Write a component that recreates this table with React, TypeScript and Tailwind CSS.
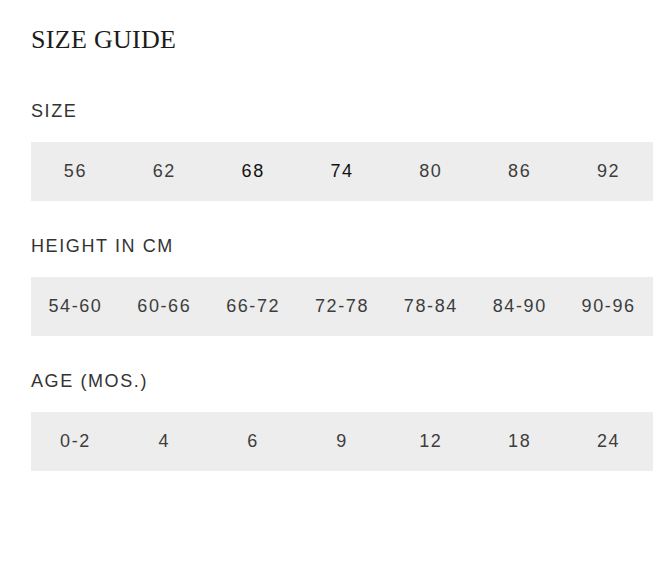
const sections = [
  { label: "SIZE", values: ["56", "62", "68", "74", "80", "86", "92"], dark: ["68", "74"] },
  { label: "HEIGHT IN CM", values: ["54-60", "60-66", "66-72", "72-78", "78-84", "84-90", "90-96"], dark: [] },
  { label: "AGE (MOS.)", values: ["0-2", "4", "6", "9", "12", "18", "24"], dark: [] },
];

export default function App() {
  return (
    <main className="min-h-[562px] w-[671px] bg-white pl-[31px] pt-[24px]" style={{ fontFamily: '"Liberation Sans", Arial, sans-serif' }}>
      <h1 className="text-[26px] leading-[32px] tracking-[0.3px] text-[#1c1c1c] font-normal" style={{ fontFamily: '"Liberation Serif", "Times New Roman", serif' }}>
        SIZE GUIDE
      </h1>

      <div className="mt-[43px] flex flex-col gap-[33px]">
        {sections.map(section => (
          <section key={section.label}>
            <h2 className="text-[18px] leading-[24px] tracking-[1.6px] text-[#333] mb-[19px]">{section.label}</h2>
            <div className="w-[622px] h-[59px] bg-[#ededed] flex items-center">
              {section.values.map(v => (
                <span
                  key={v}
                  className={`flex-1 text-center text-[18px] tracking-[1.6px] ${section.dark.includes(v) ? "text-[#111]" : "text-[#3d3d3d]"}`}
                >
                  {v}
                </span>
              ))}
            </div>
          </section>
        ))}
      </div>
    </main>
  );
}
